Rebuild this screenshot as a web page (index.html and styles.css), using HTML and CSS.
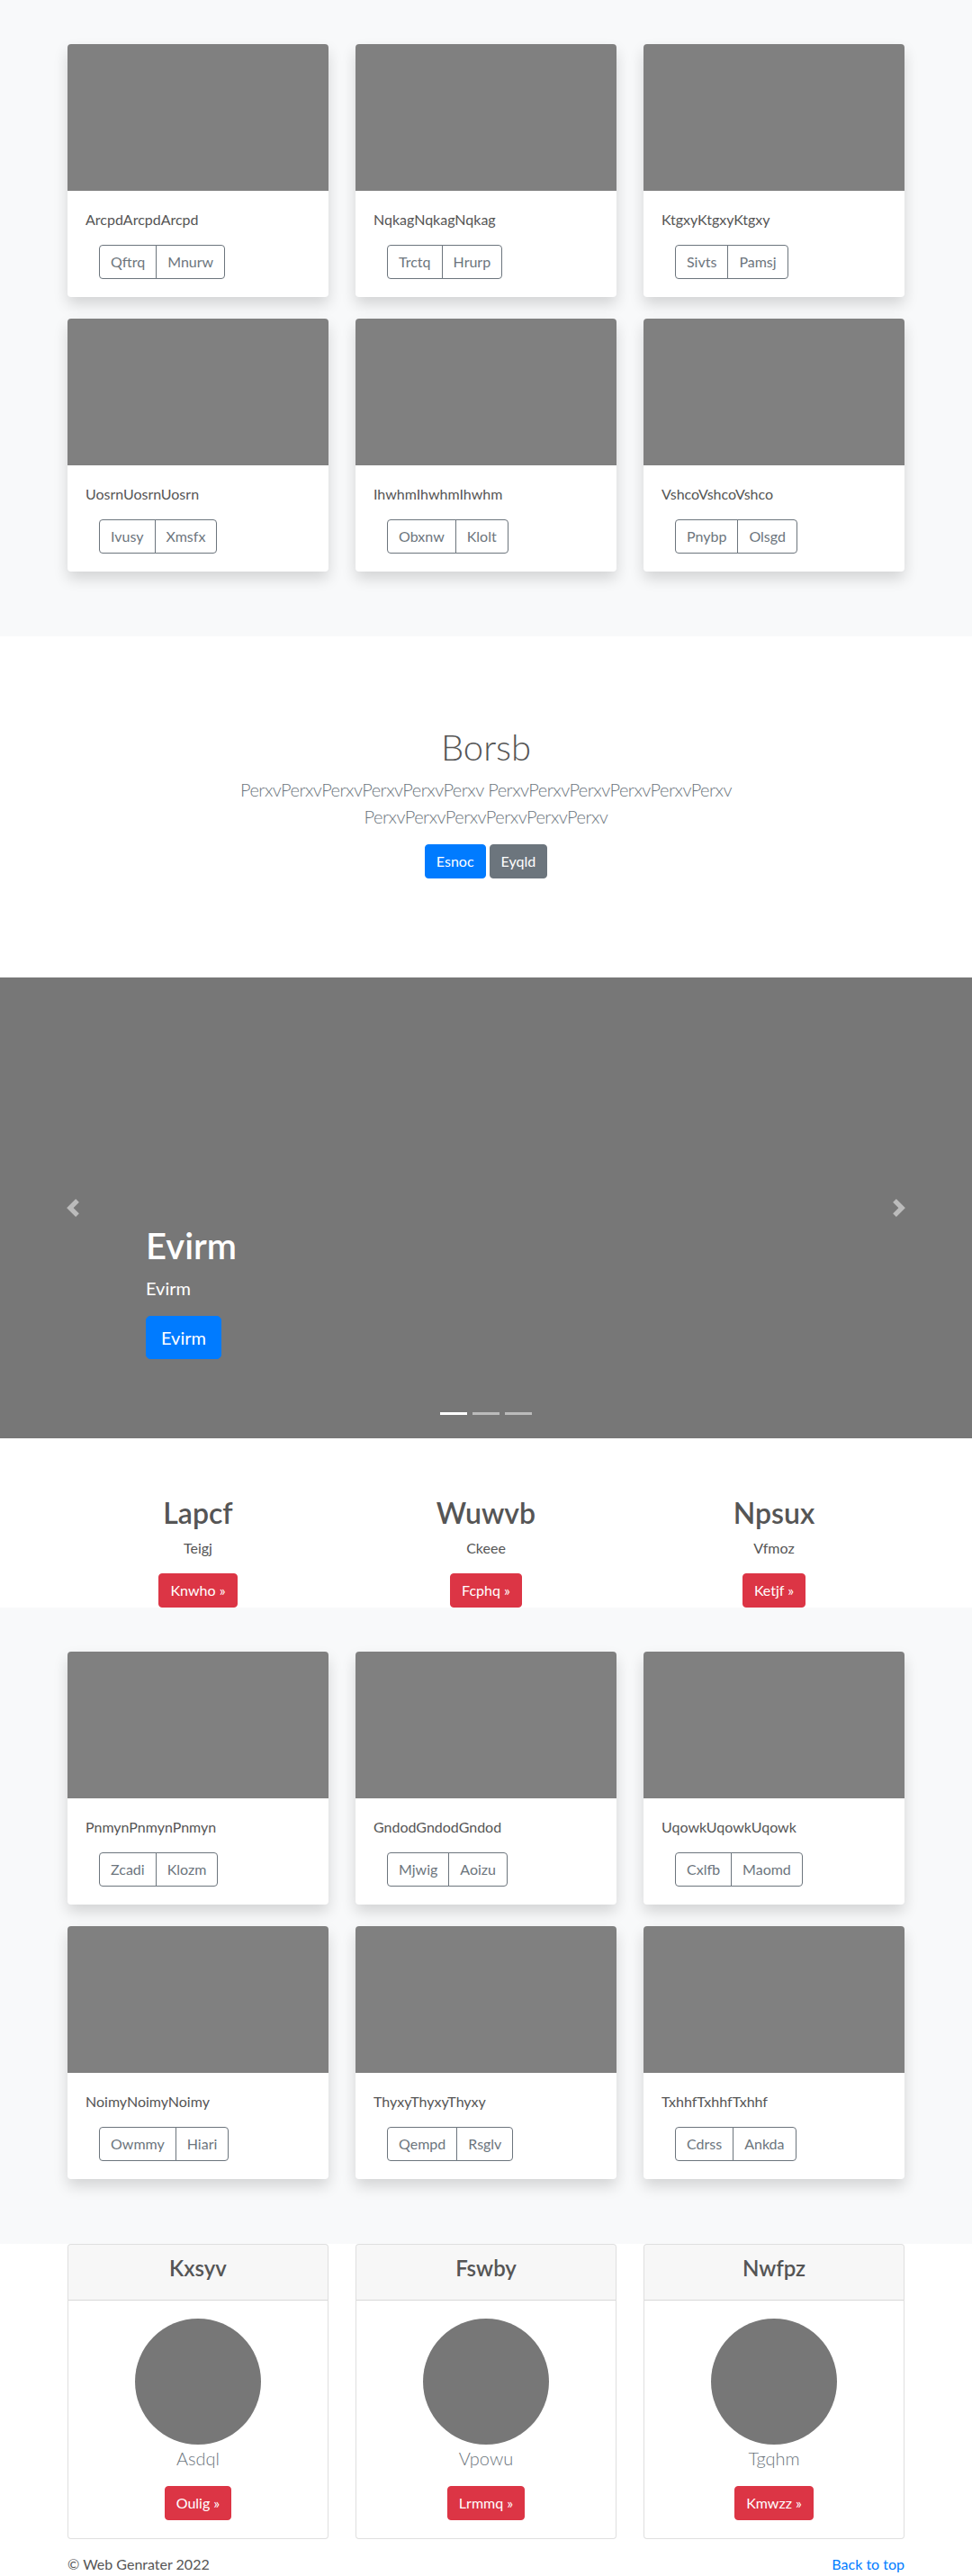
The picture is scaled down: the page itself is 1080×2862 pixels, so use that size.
FILE: index.html
```html
<!DOCTYPE html>
<html lang="en">
<head>
<meta charset="utf-8">
<title>Web Genrater</title>
<link rel="stylesheet" href="styles.css">
</head>
<body>
<main>
  <section class="album">
    <div class="container">
      <div class="grid3 card-grid">
        <div class="card"><div class="card-img"></div><div class="card-body"><p class="card-text">ArcpdArcpdArcpd</p><div class="btn-group"><button type="button" class="btn btn-outline">Qftrq</button><button type="button" class="btn btn-outline">Mnurw</button></div></div></div>
        <div class="card"><div class="card-img"></div><div class="card-body"><p class="card-text">NqkagNqkagNqkag</p><div class="btn-group"><button type="button" class="btn btn-outline">Trctq</button><button type="button" class="btn btn-outline">Hrurp</button></div></div></div>
        <div class="card"><div class="card-img"></div><div class="card-body"><p class="card-text">KtgxyKtgxyKtgxy</p><div class="btn-group"><button type="button" class="btn btn-outline">Sivts</button><button type="button" class="btn btn-outline">Pamsj</button></div></div></div>
        <div class="card"><div class="card-img"></div><div class="card-body"><p class="card-text">UosrnUosrnUosrn</p><div class="btn-group"><button type="button" class="btn btn-outline">Ivusy</button><button type="button" class="btn btn-outline">Xmsfx</button></div></div></div>
        <div class="card"><div class="card-img"></div><div class="card-body"><p class="card-text">IhwhmIhwhmIhwhm</p><div class="btn-group"><button type="button" class="btn btn-outline">Obxnw</button><button type="button" class="btn btn-outline">Klolt</button></div></div></div>
        <div class="card"><div class="card-img"></div><div class="card-body"><p class="card-text">VshcoVshcoVshco</p><div class="btn-group"><button type="button" class="btn btn-outline">Pnybp</button><button type="button" class="btn btn-outline">Olsgd</button></div></div></div>
      </div>
    </div>
  </section>

  <section class="jumbotron">
    <div class="jumbo-inner">
      <h1 class="jumbotron-heading">Borsb</h1>
      <p class="lead">PerxvPerxvPerxvPerxvPerxvPerxv PerxvPerxvPerxvPerxvPerxvPerxv PerxvPerxvPerxvPerxvPerxvPerxv</p>
      <div class="hero-actions">
        <a class="btn btn-primary" href="#">Esnoc</a>
        <a class="btn btn-secondary" href="#">Eyqld</a>
      </div>
    </div>
  </section>

  <section class="carousel">
    <a class="carousel-control prev" href="#" aria-label="Previous">
      <svg width="20" height="20" viewBox="0 0 8 8" fill="#fff"><path d="M5.25 0l-4 4 4 4 1.5-1.5L4.25 4l2.5-2.5L5.25 0z"/></svg>
    </a>
    <div class="carousel-caption">
      <h1>Evirm</h1>
      <p>Evirm</p>
      <p class="caption-action"><a class="btn btn-lg btn-primary" href="#">Evirm</a></p>
    </div>
    <a class="carousel-control next" href="#" aria-label="Next">
      <svg width="20" height="20" viewBox="0 0 8 8" fill="#fff"><path d="M2.75 0l-1.5 1.5L3.75 4l-2.5 2.5L2.75 8l4-4-4-4z"/></svg>
    </a>
    <ol class="indicators">
      <li class="active"></li>
      <li></li>
      <li></li>
    </ol>
  </section>

  <section class="marketing">
    <div class="container">
      <div class="grid3">
        <div class="feature"><h2>Lapcf</h2><p>Teigj</p><p class="last"><a class="btn btn-danger" href="#">Knwho &raquo;</a></p></div>
        <div class="feature"><h2>Wuwvb</h2><p>Ckeee</p><p class="last"><a class="btn btn-danger" href="#">Fcphq &raquo;</a></p></div>
        <div class="feature"><h2>Npsux</h2><p>Vfmoz</p><p class="last"><a class="btn btn-danger" href="#">Ketjf &raquo;</a></p></div>
      </div>
    </div>
  </section>

  <section class="album">
    <div class="container">
      <div class="grid3 card-grid">
        <div class="card"><div class="card-img"></div><div class="card-body"><p class="card-text">PnmynPnmynPnmyn</p><div class="btn-group"><button type="button" class="btn btn-outline">Zcadi</button><button type="button" class="btn btn-outline">Klozm</button></div></div></div>
        <div class="card"><div class="card-img"></div><div class="card-body"><p class="card-text">GndodGndodGndod</p><div class="btn-group"><button type="button" class="btn btn-outline">Mjwig</button><button type="button" class="btn btn-outline">Aoizu</button></div></div></div>
        <div class="card"><div class="card-img"></div><div class="card-body"><p class="card-text">UqowkUqowkUqowk</p><div class="btn-group"><button type="button" class="btn btn-outline">Cxlfb</button><button type="button" class="btn btn-outline">Maomd</button></div></div></div>
        <div class="card"><div class="card-img"></div><div class="card-body"><p class="card-text">NoimyNoimyNoimy</p><div class="btn-group"><button type="button" class="btn btn-outline">Owmmy</button><button type="button" class="btn btn-outline">Hiari</button></div></div></div>
        <div class="card"><div class="card-img"></div><div class="card-body"><p class="card-text">ThyxyThyxyThyxy</p><div class="btn-group"><button type="button" class="btn btn-outline">Qempd</button><button type="button" class="btn btn-outline">Rsglv</button></div></div></div>
        <div class="card"><div class="card-img"></div><div class="card-body"><p class="card-text">TxhhfTxhhfTxhhf</p><div class="btn-group"><button type="button" class="btn btn-outline">Cdrss</button><button type="button" class="btn btn-outline">Ankda</button></div></div></div>
      </div>
    </div>
  </section>

  <section class="pricing">
    <div class="container">
      <div class="grid3">
        <div class="price-card"><div class="price-header"><h4>Kxsyv</h4></div><div class="price-body"><div class="avatar"></div><p class="price-name">Asdql</p><a class="btn btn-danger" href="#">Oulig &raquo;</a></div></div>
        <div class="price-card"><div class="price-header"><h4>Fswby</h4></div><div class="price-body"><div class="avatar"></div><p class="price-name">Vpowu</p><a class="btn btn-danger" href="#">Lrmmq &raquo;</a></div></div>
        <div class="price-card"><div class="price-header"><h4>Nwfpz</h4></div><div class="price-body"><div class="avatar"></div><p class="price-name">Tgqhm</p><a class="btn btn-danger" href="#">Kmwzz &raquo;</a></div></div>
      </div>
    </div>
  </section>
</main>

<footer class="footer">
  <div class="container footer-inner">
    <p>&copy; Web Genrater 2022</p>
    <a href="#">Back to top</a>
  </div>
</footer>
</body>
</html>
```

FILE: styles.css
```css
* {
  box-sizing: border-box;
}

body {
  margin: 0;
  font-family: Lato, "Segoe UI", "Open Sans", sans-serif;
  font-size: 16px;
  line-height: 1.5;
  color: #555;
  background: #fff;
}

p {
  margin: 0 0 16px;
}

.container {
  width: 960px;
  margin: 0 auto;
  padding: 0 15px;
}

.grid3 {
  display: grid;
  grid-template-columns: repeat(3, 290px);
  column-gap: 30px;
}

/* album sections */
.album {
  background: #f8f9fa;
  padding: 49px 0 72px;
}

.card-grid {
  row-gap: 24px;
}

.card {
  background: #fff;
  border-radius: 4px;
  box-shadow: 0 8px 16px rgba(0, 0, 0, 0.15);
  overflow: hidden;
}

.card-img {
  height: 163px;
  background: #808080;
}

.card-body {
  padding: 20px;
}

.card-text {
  margin: 0 0 16px;
}

.btn-group {
  display: inline-flex;
  margin-left: 15px;
}

.btn {
  display: inline-block;
  font-family: inherit;
  font-size: 16px;
  font-weight: 400;
  line-height: 24px;
  padding: 6px 12px;
  border: 1px solid transparent;
  border-radius: 4px;
  text-decoration: none;
  text-align: center;
  cursor: pointer;
}

.btn-outline {
  color: #6c757d;
  background: transparent;
  border-color: #6c757d;
}

.btn-group .btn:first-child {
  border-radius: 4px 0 0 4px;
}

.btn-group .btn + .btn {
  margin-left: -1px;
  border-radius: 0 4px 4px 0;
}

.btn-primary {
  color: #fff;
  background: #007bff;
  border-color: #007bff;
}

.btn-secondary {
  color: #fff;
  background: #6c757d;
  border-color: #6c757d;
}

.btn-danger {
  color: #fff;
  background: #dc3545;
  border-color: #dc3545;
}

.btn-lg {
  font-size: 20px;
  line-height: 30px;
  padding: 8px 16px;
  border-radius: 5px;
}

/* jumbotron */
.jumbotron {
  padding: 99px 0 102px;
  text-align: center;
}

.jumbo-inner {
  max-width: 640px;
  margin: 0 auto;
  padding: 0 15px;
}

.jumbotron-heading {
  font-size: 40px;
  font-weight: 300;
  line-height: 1.2;
  margin: 0 0 8px;
}

.lead {
  font-size: 20px;
  font-weight: 300;
  line-height: 30px;
  letter-spacing: -0.5px;
  color: #6c757d;
  margin: 0 0 16px;
}

.hero-actions {
  display: flex;
  justify-content: center;
  gap: 4px;
  margin: 8px 0;
}

/* carousel */
.carousel {
  position: relative;
  height: 512px;
  background: #777;
  margin-bottom: 64px;
  overflow: hidden;
}

.carousel-caption {
  position: absolute;
  left: 15%;
  right: 15%;
  bottom: 52px;
  padding: 20px 0;
  color: #fff;
  text-align: left;
}

.carousel-caption h1 {
  font-size: 40px;
  font-weight: 600;
  line-height: 1.2;
  margin: 0 0 8px;
}

.carousel-caption p {
  font-size: 20px;
  line-height: 30px;
  margin: 0 0 16px;
}

.carousel-caption .caption-action {
  line-height: 0;
}

.carousel-control {
  position: absolute;
  top: 0;
  bottom: 0;
  width: 15%;
  display: flex;
  align-items: center;
  justify-content: center;
  opacity: 0.5;
}

.carousel-control.prev {
  left: 0;
}

.carousel-control.next {
  right: 0;
}

.indicators {
  position: absolute;
  left: 15%;
  right: 15%;
  bottom: 16px;
  display: flex;
  justify-content: center;
  margin: 0;
  padding: 0;
  list-style: none;
}

.indicators li {
  width: 30px;
  height: 23px;
  margin: 0 3px;
  border-top: 10px solid transparent;
  border-bottom: 10px solid transparent;
  background: #fff;
  background-clip: padding-box;
  opacity: 0.5;
}

.indicators li.active {
  opacity: 1;
}

/* marketing */
.feature {
  text-align: center;
}

.feature h2 {
  font-size: 32px;
  font-weight: 600;
  line-height: 1.2;
  margin: 0 0 8px;
}

.feature .last {
  margin: 0;
}

/* pricing */
.price-card {
  background: #fff;
  border: 1px solid rgba(0, 0, 0, 0.125);
  border-radius: 4px;
  text-align: center;
  overflow: hidden;
}

.price-header {
  padding: 12px 20px;
  background: rgba(0, 0, 0, 0.03);
  border-bottom: 1px solid rgba(0, 0, 0, 0.125);
}

.price-header h4 {
  font-size: 24px;
  font-weight: 600;
  line-height: 1.2;
  margin: 0 0 8px;
}

.price-body {
  padding: 20px;
}

.avatar {
  width: 140px;
  height: 140px;
  border-radius: 50%;
  background: #777;
  margin: 0 auto;
}

.price-name {
  font-size: 20px;
  font-weight: 300;
  line-height: 30px;
  color: #6c757d;
  margin: 0 0 16px;
}

/* footer */
.footer {
  padding: 16px 0 48px;
}

.footer-inner {
  display: flex;
  justify-content: space-between;
}

.footer-inner p {
  margin: 0;
}

.footer-inner a {
  color: #007bff;
  text-decoration: none;
}
```
